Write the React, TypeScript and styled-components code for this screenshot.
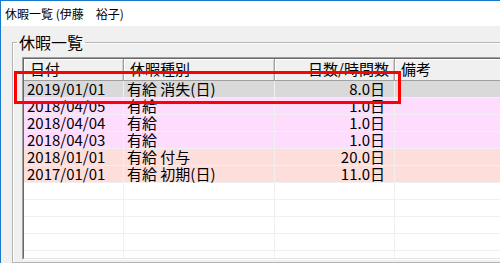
import styled, { createGlobalStyle } from 'styled-components';

const GlobalStyle = createGlobalStyle`
  html, body {
    margin: 0;
    padding: 0;
    overflow: hidden;
  }
  body {
    font-family: "Noto Sans CJK JP", "Noto Sans", sans-serif;
    color: #000;
  }
`;

const Window = styled.div`
  position: relative;
  display: flex;
  flex-direction: column;
  width: 500px;
  height: 263px;
  border-top: 1px solid #1979ca;
  border-left: 1px solid #1979ca;
  box-sizing: border-box;
  overflow: hidden;
`;

const TitleBar = styled.div`
  height: 25px;
  padding-left: 4px;
  background: #fff;
  font-size: 12px;
  line-height: 25px;
  white-space: pre;
`;

const Client = styled.div`
  flex-grow: 1;
  display: flex;
  padding: 8px 0 0 11px;
  background: #f0f0f0;
  overflow: hidden;
`;

const GroupBox = styled.fieldset`
  flex-grow: 1;
  min-width: 0;
  margin: 0 -40px 0 0;
  padding: 7px 0 40px 9px;
  border: 1px solid #b4b4b4;
  box-shadow: inset 1px 1px 0 #fff;
`;

const GroupLabel = styled.legend`
  margin-left: -5px;
  padding: 0 2px;
  font-size: 16px;
  line-height: 16px;
`;

const ListView = styled.div`
  height: 203px;
  border: 1px solid;
  border-color: #a0a0a0 #fff #fff #a0a0a0;
  box-sizing: border-box;
`;

const ListInner = styled.div`
  height: 100%;
  border: 1px solid;
  border-color: #696969 #e3e3e3 #e3e3e3 #696969;
  background: #fff;
  box-sizing: border-box;
  overflow: hidden;
`;

const Row = styled.div<{ $bg?: string }>`
  display: grid;
  grid-template-columns: 100px 151px 120px 1fr;
  height: 17px;
  background: ${(p) => p.$bg ?? '#fff'};
  border-bottom: 1px solid #f0f0f0;
  box-sizing: border-box;
  font-size: 15px;
  line-height: 16px;
  white-space: nowrap;
`;

const HeaderRow = styled(Row)`
  height: 22px;
  background: #f0f0f0;
  border-bottom: 1px solid #a0a0a0;
`;

const HeaderCell = styled.div<{ $right?: boolean }>`
  padding: 0 ${(p) => (p.$right ? '5px' : '0')} 0 ${(p) => (p.$right ? '0' : '6px')};
  text-align: ${(p) => (p.$right ? 'right' : 'left')};
  line-height: 19px;
  border-right: 1px solid #a0a0a0;
  box-shadow: inset 1px 1px 0 #fff, inset -1px 0 0 #d0d0d0;
`;

const Cell = styled.div<{ $right?: boolean }>`
  padding: 0 ${(p) => (p.$right ? '9px' : '0')} 0 ${(p) => (p.$right ? '0' : '3px')};
  text-align: ${(p) => (p.$right ? 'right' : 'left')};
  border-right: 1px solid #f0f0f0;
`;

const Highlight = styled.div`
  position: absolute;
  left: 13px;
  top: 70px;
  width: 387px;
  height: 33px;
  border: 3px solid #ff0000;
  box-sizing: border-box;
  pointer-events: none;
`;

type Item = { date: string; kind: string; amount: string; bg: string };

const SELECTED = '#d9d9d9';
const PINK = '#fddcfd';
const SALMON = '#fddedb';

const items: Item[] = [
  { date: '2019/01/01', kind: '有給 消失(日)', amount: '8.0日', bg: SELECTED },
  { date: '2018/04/05', kind: '有給', amount: '1.0日', bg: PINK },
  { date: '2018/04/04', kind: '有給', amount: '1.0日', bg: PINK },
  { date: '2018/04/03', kind: '有給', amount: '1.0日', bg: PINK },
  { date: '2018/01/01', kind: '有給 付与', amount: '20.0日', bg: SALMON },
  { date: '2017/01/01', kind: '有給 初期(日)', amount: '11.0日', bg: SALMON },
];

const EMPTY_ROWS = 5;

const App = () => {
  return (
    <>
      <GlobalStyle />
      <Window>
        <TitleBar>休暇一覧 (伊藤{'\u3000'}裕子)</TitleBar>
        <Client>
          <GroupBox>
            <GroupLabel>休暇一覧</GroupLabel>
            <ListView>
              <ListInner>
                <HeaderRow>
                  <HeaderCell>日付</HeaderCell>
                  <HeaderCell>休暇種別</HeaderCell>
                  <HeaderCell $right>日数/時間数</HeaderCell>
                  <HeaderCell>備考</HeaderCell>
                </HeaderRow>
                {items.map((it) => (
                  <Row key={it.date + it.kind} $bg={it.bg}>
                    <Cell>{it.date}</Cell>
                    <Cell>{it.kind}</Cell>
                    <Cell $right>{it.amount}</Cell>
                    <Cell />
                  </Row>
                ))}
                {Array.from({ length: EMPTY_ROWS }, (_, i) => (
                  <Row key={i}>
                    <Cell />
                    <Cell />
                    <Cell />
                    <Cell />
                  </Row>
                ))}
              </ListInner>
            </ListView>
          </GroupBox>
        </Client>
        <Highlight />
      </Window>
    </>
  );
};

export default App;
